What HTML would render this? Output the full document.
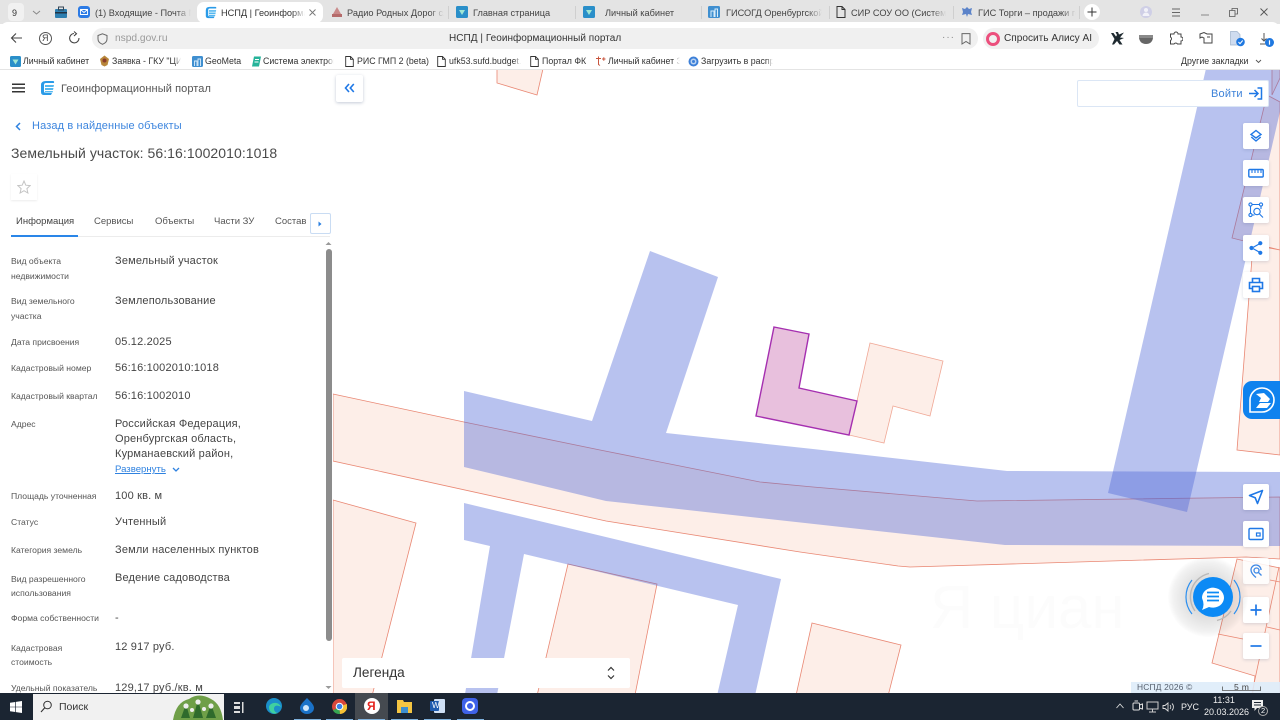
<!DOCTYPE html>
<html lang="ru"><head><meta charset="utf-8"><title>НСПД | Геоинформационный портал</title>
<style>
*{box-sizing:border-box}
html,body{margin:0;padding:0;width:1280px;height:720px;overflow:hidden;background:#fff;font-family:"Liberation Sans","Noto Sans CJK SC",sans-serif}
.a{position:absolute}
.t{position:absolute;white-space:nowrap;line-height:12px;color:#333}
.tab{font-size:9.2px;color:#444;top:7px;overflow:hidden;-webkit-mask-image:linear-gradient(90deg,#000 85%,transparent)}
.bm{font-size:8.8px;color:#333;top:55px}
.fd{overflow:hidden;-webkit-mask-image:linear-gradient(90deg,#000 90%,transparent)}
.sep{position:absolute;top:6px;width:1px;height:13px;background:#cfcfcf}
.l{font-size:8.6px;color:#555;left:11px}
.v{font-size:11px;color:#444;left:115px;letter-spacing:.17px}
.btn{position:absolute;left:1243px;width:26px;height:26px;background:#fff;border-radius:2px;box-shadow:0 1px 3px rgba(60,80,120,.2)}
.btn svg{position:absolute;left:4px;top:4px;width:18px;height:18px;fill:none;stroke:#1f78e6;stroke-width:1.4}
svg{display:block}
</style></head><body>

<!-- map -->
<svg class="a" style="left:0;top:0" width="1280" height="720" viewBox="0 0 1280 720">
<rect width="1280" height="720" fill="#fff"/>
<text x="930" y="628" font-family="Liberation Sans" font-size="60" fill="#fcfcfc">Я циан</text>
<g fill="#fdeee8" stroke="#e98773" stroke-width=".8">
<polygon points="497,60 497,83 537,95 545,60"/>
<polygon points="333,394 464,422 600,450 760,482 813,487 977,501 1280,497 1280,559 1246,557 910,567 898,566 800,552 606,521 333,461"/>
<polygon points="333,500 416,523 371,700 333,700"/>
<polygon points="568,564 657,584 634,700 536,700"/>
<polygon points="812,623 901,645 887,700 795,700"/>
<polygon points="870,343 943,361 930,416 893,406 884,443 849,435 857,401" stroke="#f0a896"/>
<polygon points="1267,95 1280,102 1280,250 1232,238"/>
<polygon points="1253,245 1280,250 1280,455 1237,450"/>
<polygon points="1272,70 1280,60 1280,78 1272,95"/>
<polygon points="1237,559 1280,568 1280,700 1252,700 1255,676 1212,663"/>
<path d="M1218,634L1243,639M1267,627L1280,630M1279,567L1252,693M1270,580L1280,582" fill="none"/>
</g>
<g fill="#4e66d7" fill-opacity=".4">
<polygon points="464,391 592,421 650,251 718,277 666,433 813,449 1007,471 1280,472 1280,546 1005,545 606,501 464,467"/>
<polygon points="464,503 781,579 754,700 716,700 738,605 524,554 496,700 464,700 490,546 464,540"/>
<polygon points="1208,60 1292,60 1187,512 1108,493"/>
</g>
<polygon points="774,327 809,334 799,388 857,401 849,435 756,416" fill="#e8c0dd" stroke="#a52fb0" stroke-width="1.4"/>
</svg>

<!-- left panel -->
<div class="a" style="left:0;top:70px;width:333px;height:623px;background:#fff"></div>
<svg class="a" style="left:12px;top:83px" width="14" height="10"><path d="M0,1.2H13M0,5H13M0,8.8H13" stroke="#333" stroke-width="1.5"/></svg>
<svg class="a" style="left:40px;top:80px" width="15" height="16" viewBox="0 0 15 16"><path d="M6,1H13Q14.500,1 14,3H6Q4,3 4,5V11Q4,13 6,13H12L11,15H4Q1,15 1,12V5Q1,1 6,1Z" fill="#2a9be8"/><path d="M5,5H14L13.500,7H5ZM5,8H13.500L13,10H5ZM5,11H13L12.500,12.500H5Z" fill="#55b8ef"/></svg>
<span class="t" style="left:61px;top:83px;font-size:11px;color:#555;letter-spacing:.09px">Геоинформационный портал</span>

<div class="a" style="left:336px;top:75px;width:27px;height:27px;background:#fff;border-radius:2px;box-shadow:0 1px 3px rgba(60,80,120,.3)"></div>
<svg class="a" style="left:344px;top:83px" width="11" height="10"><path d="M5,1L1.500,5L5,9M9.800,1L6.300,5L9.800,9" fill="none" stroke="#1f78e6" stroke-width="1.600"/></svg>

<svg class="a" style="left:15px;top:122px" width="7" height="9"><path d="M5,1L1.500,4.500L5,8" fill="none" stroke="#2f82e0" stroke-width="1.500"/></svg>
<span class="t" style="left:32px;top:120px;font-size:11px;color:#3c85de;letter-spacing:.13px">Назад в найденные объекты</span>
<span class="t" style="left:11px;top:147px;font-size:14px;color:#4a4a4a;letter-spacing:.07px">Земельный участок: 56:16:1002010:1018</span>

<div class="a" style="left:11px;top:174px;width:26px;height:26px;background:#fff;box-shadow:0 1px 2px rgba(0,0,0,.08)"></div>
<svg class="a" style="left:17px;top:180px" width="14" height="14" viewBox="0 0 14 14"><path d="M7,1L8.800,5.200L13.200,5.600L9.900,8.600L10.900,13L7,10.700L3.100,13L4.100,8.600L.8,5.600L5.200,5.200Z" fill="none" stroke="#c4c4c4" stroke-width="1"/></svg>

<span class="t" style="left:16px;top:216px;font-size:9.500px;color:#444">Информация</span>
<span class="t" style="left:94px;top:216px;font-size:9.500px;color:#555">Сервисы</span>
<span class="t" style="left:155px;top:216px;font-size:9.500px;color:#555">Объекты</span>
<span class="t" style="left:214px;top:216px;font-size:9.500px;color:#555">Части ЗУ</span>
<span class="t" style="left:275px;top:216px;font-size:9.500px;color:#555">Состав</span>
<div class="a" style="left:11px;top:236px;width:319px;height:1px;background:#ececec"></div>
<div class="a" style="left:11px;top:234.500px;width:67px;height:2px;background:#2a86e8"></div>
<div class="a" style="left:310px;top:213px;width:21px;height:21px;background:#fff;border:1px solid #c9dcf3;border-radius:2px"></div>
<svg class="a" style="left:317px;top:220px" width="6" height="8"><path d="M1.500,1.500L4.500,4L1.500,6.500Z" fill="#2a7fe0"/></svg>

<span class="t l" style="top:255px">Вид объекта</span><span class="t l" style="top:270px">недвижимости</span>
<span class="t v" style="top:255px">Земельный участок</span>
<span class="t l" style="top:295px">Вид земельного</span><span class="t l" style="top:310px">участка</span>
<span class="t v" style="top:295px">Землепользование</span>
<span class="t l" style="top:336px">Дата присвоения</span><span class="t v" style="top:336px">05.12.2025</span>
<span class="t l" style="top:362px">Кадастровый номер</span><span class="t v" style="top:362px">56:16:1002010:1018</span>
<span class="t l" style="top:390px">Кадастровый квартал</span><span class="t v" style="top:390px">56:16:1002010</span>
<span class="t l" style="top:418px">Адрес</span>
<span class="t v" style="top:418px">Российская Федерация,</span>
<span class="t v" style="top:433px">Оренбургская область,</span>
<span class="t v" style="top:448px">Курманаевский район,</span>
<span class="t" style="left:115px;top:464px;font-size:9.600px;color:#2f82e0;text-decoration:underline">Развернуть</span>
<svg class="a" style="left:172px;top:467px" width="8" height="6"><path d="M1,1L4,4L7,1" fill="none" stroke="#2f82e0" stroke-width="1.300"/></svg>
<span class="t l" style="top:490px">Площадь уточненная</span><span class="t v" style="top:490px">100 кв. м</span>
<span class="t l" style="top:516px">Статус</span><span class="t v" style="top:516px">Учтенный</span>
<span class="t l" style="top:544px">Категория земель</span><span class="t v" style="top:544px">Земли населенных пунктов</span>
<span class="t l" style="top:573px">Вид разрешенного</span><span class="t l" style="top:587px">использования</span>
<span class="t v" style="top:572px">Ведение садоводства</span>
<span class="t l" style="top:612px">Форма собственности</span><span class="t v" style="top:612px">-</span>
<span class="t l" style="top:642px">Кадастровая</span><span class="t l" style="top:656px">стоимость</span>
<span class="t v" style="top:641px">12 917 руб.</span>
<span class="t l" style="top:682px">Удельный показатель</span><span class="t v" style="top:682px">129,17 руб./кв. м</span>

<div class="a" style="left:325.500px;top:249px;width:6px;height:392px;background:#8c8c8c;border-radius:3px"></div>
<svg class="a" style="left:325px;top:241px" width="7" height="5"><path d="M3.500,1L6.500,4H.5Z" fill="#9a9a9a"/></svg>
<svg class="a" style="left:325px;top:685px" width="7" height="5"><path d="M3.500,4L6.500,1H.5Z" fill="#9a9a9a"/></svg>

<!-- login -->
<div class="a" style="left:1077px;top:80px;width:192px;height:27px;background:#fff;border:1px solid #dbe6f5;border-radius:2px"></div>
<span class="t" style="left:1211px;top:88px;font-size:11px;color:#3d82d8;letter-spacing:.2px">Войти</span>
<svg class="a" style="left:1248px;top:86px" width="15" height="15" viewBox="0 0 15 15"><path d="M1,7.500H9.500M6.500,4L10,7.500L6.500,11M9.500,2H13.500V13H9.500" fill="none" stroke="#1f78e6" stroke-width="1.500"/></svg>

<!-- right tools -->
<div class="btn" style="top:123px"><svg viewBox="0 0 18 18"><path d="M9,3.500L14,7.500L9,11L4,7.500Z"/><path d="M4.300,10L9,14L13.700,10"/></svg></div>
<div class="btn" style="top:160px"><svg viewBox="0 0 18 18"><rect x="1.800" y="5.500" width="14.400" height="7.500" rx="1"/><path d="M5,5.500V9M8,5.500V9M11,5.500V9M14,5.500V9" stroke-width="1.100"/></svg></div>
<div class="btn" style="top:197px"><svg viewBox="0 0 18 18" style="stroke-width:1.100"><circle cx="3.500" cy="3.500" r="1.600"/><circle cx="14" cy="3.500" r="1.600"/><circle cx="3.500" cy="14" r="1.600"/><circle cx="10" cy="10.500" r="3.200"/><path d="M5,3.500H12.500M3.500,5V12.500M5,14H7.500M14,5V8M12.500,13L16,16.500"/></svg></div>
<div class="btn" style="top:235px"><svg viewBox="0 0 18 18" style="stroke-width:1.200"><path d="M5,9L13,4.500M5,9L13,13.500"/><circle cx="4.500" cy="9" r="1.500" fill="#1f78e6"/><circle cx="13.300" cy="4.200" r="1.500" fill="#1f78e6"/><circle cx="13.300" cy="13.800" r="1.500" fill="#1f78e6"/></svg></div>
<div class="btn" style="top:272px"><svg viewBox="0 0 18 18" style="stroke-width:1.600"><path d="M5.500,6V2.500H12.500V6M5,12.500H2.500V6.500H15.500V12.500H13"/><rect x="5.500" y="10.500" width="7" height="5"/></svg></div>

<div class="a" style="left:1243px;top:381px;width:37px;height:38px;background:#0f82ee;border-radius:9px 0 0 9px"></div>
<svg class="a" style="left:1247px;top:385px" width="30" height="30" viewBox="0 0 30 30"><path d="M3,27V15A12,12 0 1 1 15,27Z" fill="#0f82ee" stroke="#fff" stroke-width="1.600"/><path d="M9,9L17,8L23,14L21,17H12L14,13Z" fill="#fff"/><path d="M9,23L13,18H24L20,23Z" fill="#fff"/></svg>

<div class="btn" style="top:484px"><svg viewBox="0 0 18 18" style="stroke-width:1.600"><path d="M15.500,2.500L2.500,7.500L8.200,9.800L10.500,15.500Z" stroke-linejoin="round"/></svg></div>
<div class="btn" style="top:521px"><svg viewBox="0 0 18 18"><rect x="2" y="3.500" width="14" height="11" rx="1.200"/><rect x="9.500" y="8" width="3.600" height="3" stroke-width="1.200"/></svg></div>
<div class="btn" style="top:558px;opacity:.85"><svg viewBox="0 0 18 18" style="stroke-width:1.300"><path d="M9,15.500C6,13 4,10.500 4,8A5,5 0 0 1 14,8"/><circle cx="9.500" cy="8.500" r="2.500"/><path d="M11.500,10.500L14.500,13.500"/></svg></div>
<div class="btn" style="top:597px"><svg viewBox="0 0 18 18" style="stroke-width:1.700"><path d="M9,3.500V14.500M3.500,9H14.500"/></svg></div>
<div class="btn" style="top:633px"><svg viewBox="0 0 18 18" style="stroke-width:1.700"><path d="M3.500,9H14.500"/></svg></div>

<!-- chat -->
<div class="a" style="left:1168px;top:557px;width:80px;height:80px;border-radius:50%;background:radial-gradient(circle,rgba(0,0,0,.14) 30%,rgba(0,0,0,.05) 62%,rgba(0,0,0,0) 72%)"></div>
<svg class="a" style="left:1183px;top:567px" width="60" height="60" viewBox="0 0 60 60">
<path d="M9,47A27,27 0 0 1 9,13M51,13A27,27 0 0 1 51,47" fill="none" stroke="#2b8ff0" stroke-width="1.200"/>
<path d="M12,44A24,24 0 0 1 26,6.500M48,44A24,24 0 0 1 34,53.500" fill="none" stroke="#b9b9b9" stroke-width="1.400"/>
<circle cx="30" cy="30" r="20" fill="#0c8af5"/>
<path d="M19,31A11,10 0 1 1 26,40L19,43Q22,38 19,31Z" fill="#fff"/>
<path d="M24,25.500H36M24,29.500H36M24,33.500H36" stroke="#0c8af5" stroke-width="1.700"/>
</svg>

<!-- legend -->
<div class="a" style="left:342px;top:658px;width:288px;height:30px;background:#fff;border-radius:2px"></div>
<span class="t" style="left:353px;top:666px;font-size:13.600px;line-height:14px;color:#333">Легенда</span>
<svg class="a" style="left:607px;top:666px" width="8" height="14"><path d="M1,4.500L4,1.500L7,4.500M1,9.500L4,12.500L7,9.500" fill="none" stroke="#333" stroke-width="1.200"/></svg>

<!-- attribution -->
<div class="a" style="left:1131px;top:682px;width:149px;height:11px;background:rgba(222,236,250,.9)"></div>
<span class="t" style="left:1137px;top:681px;font-size:8.400px;color:#56606e;letter-spacing:.2px">НСПД 2026 ©</span>
<span class="t" style="left:1234px;top:681px;font-size:8.600px;color:#444;letter-spacing:.3px">5 m</span>
<svg class="a" style="left:1222px;top:686px" width="41" height="6"><path d="M.5,.5V4.500H38.500V.5" fill="none" stroke="#555" stroke-width=".8"/></svg>

<!-- browser chrome -->
<div class="a" style="left:0;top:0;width:1280px;height:24px;background:#e4e4e4"></div>
<div class="a" style="left:0;top:24px;width:1280px;height:46px;background:#fff;border-bottom:1px solid #e4e4e4;border-radius:8px 8px 0 0"></div>
<div class="a" style="left:0;top:22px;width:1280px;height:8px;background:#fff;border-radius:8px 8px 0 0"></div>
<div class="a" style="left:8px;top:3px;width:16px;height:18px;background:#f1f1f1;border-radius:4px"></div>
<span class="t" style="left:12px;top:7px;font-size:9px;color:#333">9</span>
<svg class="a" style="left:32px;top:10px" width="9" height="6"><path d="M1,1L4.500,4L8,1" fill="none" stroke="#888" stroke-width="1"/></svg>
<svg class="a" style="left:55px;top:6px" width="12" height="12"><rect y="3" width="12" height="9" rx="1" fill="#2e7fb0"/><rect x="3.500" y="1" width="5" height="3" fill="none" stroke="#345" stroke-width="1"/><rect y="6" width="12" height="1.500" fill="#234"/></svg>
<svg class="a" style="left:78px;top:6px" width="12" height="12"><rect width="12" height="12" rx="3" fill="#2c7be5"/><path d="M2.500,3.500H9.500V8.500H2.500ZM2.500,3.500L6,6.500L9.500,3.500" fill="none" stroke="#fff" stroke-width=".9"/></svg>
<span class="t tab" style="left:95px;width:96px">(1) Входящие - Почта Mail</span>
<div class="a" style="left:197px;top:2px;width:126px;height:21px;background:#fff;border-radius:7px"></div>
<svg class="a" style="left:205px;top:6px" width="12" height="13" viewBox="0 0 15 16"><path d="M6,1H13Q14.500,1 14,3H6Q4,3 4,5V11Q4,13 6,13H12L11,15H4Q1,15 1,12V5Q1,1 6,1Z" fill="#2a9be8"/><path d="M5,5H14L13.500,7H5ZM5,8H13.500L13,10H5ZM5,11H13L12.500,12.500H5Z" fill="#55b8ef"/></svg>
<span class="t tab" style="left:221px;width:84px;color:#333">НСПД | Геоинформационный</span>
<svg class="a" style="left:309px;top:9px" width="7" height="7"><path d="M.5,.5L6.500,6.500M6.500,.5L.5,6.500" stroke="#777" stroke-width=".9"/></svg>
<svg class="a" style="left:331px;top:6px" width="12" height="12"><path d="M6,1L10,8H2Z" fill="#c98a8a"/><rect x="1" y="8" width="10" height="3" fill="#b56a6a"/></svg>
<span class="t tab" style="left:347px;width:97px">Радио Родных Дорог слушать</span>
<div class="sep" style="left:448px"></div>
<svg class="a" style="left:456px;top:6px" width="12" height="12"><rect width="12" height="12" rx="1.500" fill="#2a8fc9"/><path d="M3,4H9L6,9Z" fill="#9fe6d4"/></svg>
<span class="t" style="left:473px;top:7px;font-size:9.200px;color:#444">Главная страница</span>
<div class="sep" style="left:575px"></div>
<svg class="a" style="left:583px;top:6px" width="12" height="12"><rect width="12" height="12" rx="1.500" fill="#2a8fc9"/><path d="M3,4H9L6,9Z" fill="#9fe6d4"/></svg>
<span class="t" style="left:605px;top:7px;font-size:9.200px;color:#444">Личный кабинет</span>
<div class="sep" style="left:701px"></div>
<svg class="a" style="left:708px;top:6px" width="12" height="12"><rect width="12" height="12" rx="1.500" fill="#3f8fd0"/><path d="M3,11V5H6V11M7,11V3H9.500V11" fill="none" stroke="#d8ecfa" stroke-width="1"/></svg>
<span class="t tab" style="left:726px;width:96px">ГИСОГД Оренбургской области</span>
<div class="sep" style="left:829px"></div>
<svg class="a" style="left:836px;top:6px" width="10" height="12"><path d="M1,.5H6L9,3.500V11.500H1ZM6,.5V3.500H9" fill="none" stroke="#333" stroke-width="1"/></svg>
<span class="t tab" style="left:851px;width:95px">СИР СОУ ОО (Система учета</span>
<div class="sep" style="left:953px"></div>
<svg class="a" style="left:961px;top:6px" width="12" height="12"><path d="M6,1L8,3L11,2L10,6L11,9L7,8L6,11L5,8L1,9L2,6L1,2L4,3Z" fill="#5b83c9"/></svg>
<span class="t tab" style="left:978px;width:98px">ГИС Торги – продажи госимущества</span>
<div class="sep" style="left:1079px"></div>
<div class="a" style="left:1084px;top:4px;width:16px;height:16px;background:#fff;border-radius:50%"></div>
<svg class="a" style="left:1087px;top:7px" width="10" height="10"><path d="M5,.5V9.500M.5,5H9.500" stroke="#333" stroke-width="1"/></svg>
<div class="a" style="left:1140px;top:6px;width:12px;height:12px;background:#cfcfe6;border-radius:50%"></div>
<svg class="a" style="left:1142px;top:7px" width="8" height="10"><circle cx="4" cy="3" r="2" fill="#f2f2f8"/><path d="M.5,9A3.500,3.500 0 0 1 7.500,9Z" fill="#f2f2f8"/></svg>
<svg class="a" style="left:1171px;top:8px" width="10" height="9"><path d="M1,1H9M1,4.500H9M1,8H9" stroke="#666" stroke-width=".9"/></svg>
<svg class="a" style="left:1201px;top:14px" width="9" height="2"><path d="M0,1H8" stroke="#888" stroke-width="1"/></svg>
<svg class="a" style="left:1229px;top:8px" width="9" height="9"><path d="M3,2.500V.5H8.500V6H6.500M.5,2.500H6V8.500H.5Z" fill="none" stroke="#555" stroke-width=".8"/></svg>
<svg class="a" style="left:1260px;top:8px" width="8" height="8"><path d="M.5,.5L7.500,7.500M7.500,.5L.5,7.500" stroke="#555" stroke-width=".9"/></svg>

<svg class="a" style="left:10px;top:32px" width="13" height="12"><path d="M12,6H1.500M6,1.500L1.500,6L6,10.500" fill="none" stroke="#444" stroke-width="1.100"/></svg>
<div class="a" style="left:39px;top:32px;width:13px;height:13px;border:1px solid #555;border-radius:50%"></div>
<span class="t" style="left:42px;top:33px;font-size:9px;line-height:11px;color:#444">Я</span>
<svg class="a" style="left:68px;top:31px" width="13" height="14"><path d="M6,2.500A4.700,4.700 0 1 0 11,7M6,.5L8.500,2.700L6,5" fill="none" stroke="#444" stroke-width="1.100"/></svg>
<div class="a" style="left:92px;top:28px;width:886px;height:21px;background:#f0f0f0;border-radius:11px"></div>
<svg class="a" style="left:97px;top:33px" width="11" height="12"><path d="M5.500,.8L10,2.500V6C10,8.500 8,10.300 5.500,11.300C3,10.300 1,8.500 1,6V2.500Z" fill="none" stroke="#666" stroke-width="1"/></svg>
<span class="t" style="left:115px;top:33px;font-size:10.200px;color:#9a9a9a">nspd.gov.ru</span>
<span class="t" style="left:449px;top:33px;font-size:10px;color:#333;letter-spacing:.04px">НСПД | Геоинформационный портал</span>
<span class="t" style="left:942px;top:32px;font-size:10px;color:#888;letter-spacing:1px">···</span>
<svg class="a" style="left:961px;top:33px" width="10" height="12"><path d="M1,.6H9V11L5,8.500L1,11Z" fill="none" stroke="#666" stroke-width="1"/></svg>
<div class="a" style="left:983px;top:28px;width:116px;height:21px;background:#f0f0f0;border-radius:11px"></div>
<div class="a" style="left:986px;top:32px;width:14px;height:14px;border:3.500px solid #ec4f7d;border-radius:50%"></div>
<span class="t" style="left:1004px;top:33px;font-size:10.100px;color:#333">Спросить Алису AI</span>
<svg class="a" style="left:1110px;top:31px" width="15" height="15" viewBox="0 0 15 15"><path d="M1,2H3.500L6,5.500L7,4L5.500,1H8L9,3.500L14,1.500L10,6.500L14,7L9.500,9L12.500,13.500H9.500L7,10L4,13.500H2L4.500,8Z" fill="#1f2a30"/></svg>
<svg class="a" style="left:1139px;top:35px" width="15" height="10"><path d="M0,0H14V3H0Z" fill="#8a8a8a"/><path d="M0,3H14Q13,9 7,9Q1,9 0,3Z" fill="#666"/></svg>
<svg class="a" style="left:1169px;top:31px" width="14" height="14"><path d="M5,3A2,2 0 0 1 9,3H12V6A2,2 0 0 1 12,10V13H8.500A2,2 0 0 0 5,13H1.500V9.500A2,2 0 0 0 1.500,6V3Z" fill="none" stroke="#444" stroke-width="1"/></svg>
<svg class="a" style="left:1199px;top:31px" width="14" height="14"><path d="M1,3L5,1.500L8,3H13V12H5V7L3,6L1,7Z" fill="none" stroke="#444" stroke-width="1"/><path d="M8,6H11" stroke="#444"/></svg>
<svg class="a" style="left:1230px;top:31px" width="15" height="16"><path d="M.5,.5H7L10,3.500V14H.5Z" fill="#cfdcef" stroke="#9fb2cc" stroke-width=".7"/><circle cx="10.500" cy="11" r="4.300" fill="#1f78e0"/><path d="M8.500,11L10,12.700L12.700,9.500" fill="none" stroke="#fff" stroke-width="1"/></svg>
<svg class="a" style="left:1260px;top:33px" width="15" height="15"><path d="M4,0V8M1.500,5.500L4,8L6.500,5.500M0,11H6" fill="none" stroke="#555" stroke-width="1"/><circle cx="9.500" cy="9.500" r="4.500" fill="#1f78e0"/><path d="M9.500,7.300V11.700" stroke="#fff" stroke-width="1.200"/></svg>

<!-- bookmarks -->
<svg class="a" style="left:10px;top:56px" width="11" height="11"><rect width="11" height="11" rx="1.500" fill="#2a8fc9"/><path d="M2.500,3.500H8.500L5.500,8.500Z" fill="#9fe6d4"/></svg>
<span class="t bm" style="left:23px">Личный кабинет</span>
<svg class="a" style="left:99px;top:55px" width="11" height="12"><path d="M5.500,.5L10,4L8.500,10L5.500,11.500L2.500,10L1,4Z" fill="#b8863a"/><circle cx="5.500" cy="5.500" r="2" fill="#8a3b2a"/></svg>
<span class="t bm fd" style="left:112px;width:69px">Заявка - ГКУ "ЦИТ"</span>
<svg class="a" style="left:192px;top:56px" width="11" height="11"><rect width="11" height="11" rx="1.500" fill="#3f8fd0"/><path d="M2.500,10V5H5V10M6,10V3H8.500V10" fill="none" stroke="#d8ecfa" stroke-width=".9"/></svg>
<span class="t bm" style="left:205px">GeoMeta</span>
<svg class="a" style="left:251px;top:56px" width="11" height="11"><path d="M3,.5H10L8,10.500H1Z" fill="#26b39a"/><path d="M4,3.500H8M3.500,6H7.500" stroke="#fff" stroke-width="1"/></svg>
<span class="t bm fd" style="left:263px;width:71px">Система электронного</span>
<svg class="a" style="left:345px;top:56px" width="9" height="11"><path d="M.7,.5H5.500L8.300,3.300V10.500H.7ZM5.500,.5V3.300H8.300" fill="none" stroke="#333" stroke-width=".9"/></svg>
<span class="t bm" style="left:357px">РИС ГМП 2 (beta)</span>
<svg class="a" style="left:437px;top:56px" width="9" height="11"><path d="M.7,.5H5.500L8.300,3.300V10.500H.7ZM5.500,.5V3.300H8.300" fill="none" stroke="#333" stroke-width=".9"/></svg>
<span class="t bm fd" style="left:449px;width:72px">ufk53.sufd.budget.gov.ru</span>
<svg class="a" style="left:530px;top:56px" width="9" height="11"><path d="M.7,.5H5.500L8.300,3.300V10.500H.7ZM5.500,.5V3.300H8.300" fill="none" stroke="#333" stroke-width=".9"/></svg>
<span class="t bm" style="left:542px">Портал ФК</span>
<svg class="a" style="left:595px;top:56px" width="11" height="10"><path d="M1,2.500H6M3.500,.5V8.500L5,9.500M7,3H10.500M8.800,1.200V4.800" fill="none" stroke="#c8553d" stroke-width="1"/></svg>
<span class="t bm fd" style="left:608px;width:72px">Личный кабинет ЗК</span>
<svg class="a" style="left:688px;top:56px" width="11" height="11"><circle cx="5.500" cy="5.500" r="5" fill="#3d80d8"/><circle cx="5.500" cy="5.500" r="3" fill="#bcd4f2"/><circle cx="5.500" cy="5.500" r="1.500" fill="#3d80d8"/></svg>
<span class="t bm fd" style="left:701px;width:72px">Загрузить в распределенный</span>
<span class="t bm" style="left:1181px">Другие закладки</span>
<svg class="a" style="left:1255px;top:59px" width="7" height="5"><path d="M1,1L3.500,3.500L6,1" fill="none" stroke="#555" stroke-width=".9"/></svg>

<!-- taskbar -->
<div class="a" style="left:0;top:693px;width:1280px;height:27px;background:#1b2532"></div>
<svg class="a" style="left:10px;top:701px" width="12" height="12"><path d="M0,1.800L5.300,1V5.700H0ZM6,.9L12,0V5.700H6ZM0,6.300H5.300V11L0,10.200ZM6,6.300H12V12L6,11.100Z" fill="#fff"/></svg>
<div class="a" style="left:33px;top:694px;width:191px;height:26px;background:#f1f1f1"></div>
<svg class="a" style="left:40px;top:700px" width="13" height="13"><circle cx="7.500" cy="5" r="3.800" fill="none" stroke="#333" stroke-width="1"/><path d="M4.800,7.800L1,12" stroke="#333" stroke-width="1.100"/></svg>
<span class="t" style="left:59px;top:701px;font-size:10.500px;color:#333">Поиск</span>
<svg class="a" style="left:173px;top:694px" width="50" height="26" viewBox="0 0 50 26"><path d="M0,26Q3,8 16,5Q26,-2 38,5Q48,10 50,26Z" fill="#6f9f48"/><path d="M8,24L13,10L17,24ZM20,24L25,6L30,24ZM33,24L38,10L43,24Z" fill="#2f6b2c"/><circle cx="13" cy="12" r="2.600" fill="#eee"/><circle cx="25" cy="8" r="2.600" fill="#eee"/><circle cx="38" cy="12" r="2.600" fill="#eee"/><circle cx="19" cy="16" r="2" fill="#eee"/><circle cx="31" cy="15" r="2" fill="#eee"/></svg>
<svg class="a" style="left:234px;top:701px" width="12" height="12"><path d="M0,1H6V3H0ZM0,5H6V8H0ZM0,10H6V12H0ZM8,1H9.500V12H8Z" fill="#ddd"/></svg>
<svg class="a" style="left:266px;top:698px" width="16" height="16"><circle cx="8" cy="8" r="8" fill="#1b8fc9"/><path d="M3,9C4,4 13,3 15,9C12,7 8,7 8,11C8,13 10,15 12,15C7,17 3,14 3,9Z" fill="#3fd0a0"/></svg>
<svg class="a" style="left:300px;top:698px" width="14" height="16"><path d="M7,0C11,4 14,7 14,10A7,6 0 0 1 0,10C0,7 3,4 7,0Z" fill="#1a72c8"/><circle cx="6" cy="10" r="3" fill="#cfe6fa"/></svg>
<svg class="a" style="left:332px;top:699px" width="15" height="15"><circle cx="7.500" cy="7.500" r="7.500" fill="#d9473a"/><path d="M7.500,7.500L1,11.500A7.500,7.500 0 0 0 8,15Z" fill="#35a653"/><path d="M7.500,7.500L8,15A7.500,7.500 0 0 0 14.800,5Z" fill="#f5c133"/><circle cx="7.500" cy="7.500" r="3.300" fill="#3b82e8" stroke="#fff" stroke-width="1"/></svg>
<div class="a" style="left:355px;top:693px;width:33px;height:27px;background:#454a50"></div>
<div class="a" style="left:364px;top:698px;width:16px;height:16px;background:#fff;border-radius:50%"></div>
<span class="t" style="left:367px;top:700px;font-size:12px;font-weight:bold;color:#e52620">Я</span>
<svg class="a" style="left:397px;top:699px" width="15" height="14"><path d="M0,1H6L7,3H15V14H0Z" fill="#f4c542"/><rect x="4" y="8" width="7" height="6" fill="#3d8fd0"/></svg>
<svg class="a" style="left:430px;top:699px" width="15" height="14"><rect x="4" width="11" height="14" rx="1" fill="#cfe0f5"/><rect width="9" height="10" y="2" rx="1" fill="#1f5bae"/></svg>
<span class="t" style="left:432px;top:701px;font-size:8px;line-height:9px;color:#fff">W</span>
<svg class="a" style="left:462px;top:698px" width="16" height="16"><rect width="16" height="16" rx="4" fill="#3f62e8"/><circle cx="8" cy="8" r="4" fill="none" stroke="#fff" stroke-width="2"/></svg>
<div class="a" style="left:294px;top:719px;width:27px;height:1px;background:#7fb2dd"></div>
<div class="a" style="left:326px;top:719px;width:27px;height:1px;background:#7fb2dd"></div>
<div class="a" style="left:358px;top:719px;width:27px;height:1px;background:#7fb2dd"></div>
<div class="a" style="left:391px;top:719px;width:27px;height:1px;background:#7fb2dd"></div>
<div class="a" style="left:424px;top:719px;width:27px;height:1px;background:#7fb2dd"></div>
<div class="a" style="left:457px;top:719px;width:27px;height:1px;background:#7fb2dd"></div>

<svg class="a" style="left:1116px;top:703px" width="8" height="6"><path d="M.5,5L4,1L7.500,5" fill="none" stroke="#ddd" stroke-width=".9"/></svg>
<svg class="a" style="left:1132px;top:700px" width="11" height="13"><rect x="1" y="3" width="6.500" height="7" rx="1" fill="none" stroke="#ddd"/><path d="M7.500,5L10.500,4V9L7.500,8M2.500,1H6" fill="none" stroke="#ddd"/></svg>
<svg class="a" style="left:1146px;top:701px" width="13" height="12"><path d="M1,1H12V8H1ZM6.500,8V11M3,11H10" fill="none" stroke="#ccc"/></svg>
<svg class="a" style="left:1162px;top:701px" width="13" height="12"><path d="M1,4.500H3L6,2V10L3,7.500H1ZM8,4A3,3 0 0 1 8,8M10,2.500A5,5 0 0 1 10,9.500" fill="none" stroke="#ddd" stroke-width=".9"/></svg>
<span class="t" style="left:1181px;top:701px;font-size:9px;color:#eee">РУС</span>
<span class="t" style="left:1213px;top:694px;font-size:9px;color:#eee">11:31</span>
<span class="t" style="left:1204px;top:706px;font-size:9px;color:#eee">20.03.2026</span>
<svg class="a" style="left:1252px;top:700px" width="12" height="12"><path d="M0,0H11V8H5L2.500,11V8H0Z" fill="#eee"/><path d="M2,2.500H9M2,5H9" stroke="#1b2532"/></svg>
<div class="a" style="left:1258px;top:706px;width:10px;height:10px;background:#1b2532;border:1px solid #aaa;border-radius:50%"></div>
<span class="t" style="left:1261px;top:705px;font-size:7.500px;color:#fff">2</span>
</body></html>
